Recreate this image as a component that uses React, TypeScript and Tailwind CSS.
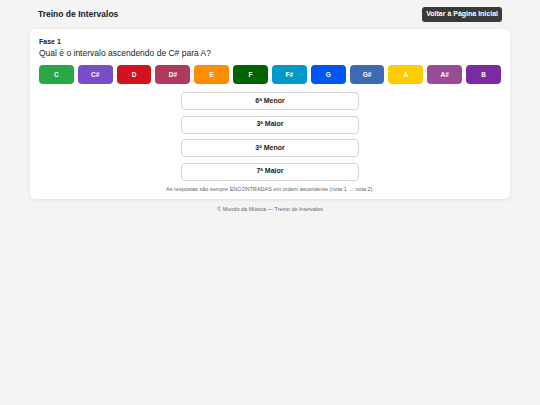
import React from 'react';

const notes = [
  { label: 'C', color: 'bg-[#28a745]' },
  { label: 'C#', color: 'bg-[#7a4dc8]' },
  { label: 'D', color: 'bg-[#d4121f]' },
  { label: 'D#', color: 'bg-[#b03a5b]' },
  { label: 'E', color: 'bg-[#fd8c00]' },
  { label: 'F', color: 'bg-[#006400]' },
  { label: 'F#', color: 'bg-[#0099cc]' },
  { label: 'G', color: 'bg-[#0055f5]' },
  { label: 'G#', color: 'bg-[#3d6bb3]' },
  { label: 'A', color: 'bg-[#ffcc00]' },
  { label: 'A#', color: 'bg-[#9b4a98]' },
  { label: 'B', color: 'bg-[#7b2aa0]' },
];

const answers = ['6ª Menor', '3ª Maior', '3ª Menor', '7ª Maior'];

export default function App() {
  return (
    <div className="min-h-[405px] bg-[#f4f4f4] font-['Liberation_Sans',Arial,'DejaVu_Sans',sans-serif] text-[#222]">
      {/* Cabeçalho */}
      <header className="flex h-[29px] items-center justify-between pl-[38px] pr-[38px]">
        <h1 className="text-[8.5px] font-bold">Treino de Intervalos</h1>
        <button className="h-[15px] rounded-[3px] bg-[#3a3a3a] px-[4px] text-[7px] font-bold text-white">
          Voltar à Página Inicial
        </button>
      </header>

      {/* Cartão principal */}
      <main className="mx-auto w-[480px] rounded-[6px] bg-white px-[9px] pb-[6px] pt-[8px] shadow-[0_1px_4px_rgba(0,0,0,0.08)]">
        <p className="text-[7px] font-bold leading-[9px]">Fase 1</p>
        <p className="mt-[1px] text-[8.5px] leading-[12px]">Qual é o intervalo ascendendo de C# para A?</p>

        <div className="mt-[6px] grid grid-cols-12 gap-[4px]">
          {notes.map((n) => (
            <button
              key={n.label}
              className={`${n.color} h-[19px] rounded-[4px] text-[6.5px] font-bold text-white`}
            >
              {n.label}
            </button>
          ))}
        </div>

        <div className="mt-[8px] flex flex-col items-center gap-[5.5px]">
          {answers.map((a, i) => (
            <button
              key={i}
              className="h-[18px] w-[178px] rounded-[4px] border border-[#d6d6d6] bg-white text-[7px] font-bold"
            >
              {a}
            </button>
          ))}
        </div>

        <p className="mt-[4px] text-center text-[5.5px] text-[#666]">
          As respostas são sempre ENCONTRADAS em ordem ascendente (nota 1 → nota 2).
        </p>
      </main>

      <footer className="mt-[6px] text-center text-[5.5px] text-[#666]">
        © Mundo da Música — Treino de Intervalos
      </footer>
    </div>
  );
}
